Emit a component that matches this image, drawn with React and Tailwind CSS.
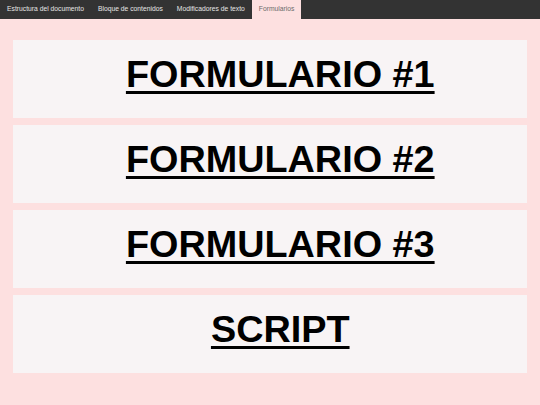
export default function App() {
  const tabs = ["Estructura del documento", "Bloque de contenidos", "Modificadores de texto"];
  const cards = ["FORMULARIO #1", "FORMULARIO #2", "FORMULARIO #3", "SCRIPT"];
  return (
    <div className="min-h-[405px] w-full bg-[#fde0e0]" style={{ fontFamily: '"Liberation Sans", Arial, sans-serif' }}>
      <nav className="flex h-[19px] bg-[#333333]">
        {tabs.map((t) => (
          <div key={t} className="flex items-center px-[7px] text-[6.75px] text-[#e6e6e6]">
            {t}
          </div>
        ))}
        <div className="flex items-center bg-[#fde0e0] px-[7px] text-[6.75px] text-[#6b6b6b]">Formularios</div>
      </nav>
      <main className="flex flex-col gap-[7.5px] px-[12.5px] pt-[21px] pr-[13px]">
        {cards.map((c) => (
          <div key={c} className="h-[77.5px] bg-[#f8f4f5] pl-[21px] pt-[13px] text-center">
            <span className="text-[37.8px] font-bold leading-[1.15] text-black underline decoration-[2.5px] underline-offset-[4px]">
              {c}
            </span>
          </div>
        ))}
      </main>
    </div>
  );
}
